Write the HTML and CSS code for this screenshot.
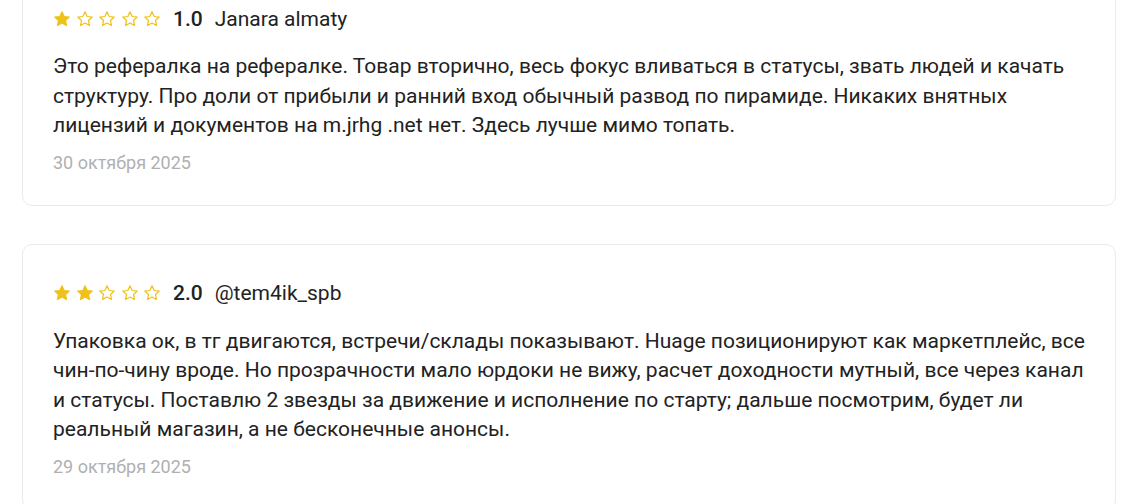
FILE: index.html
```html
<!DOCTYPE html>
<html lang="ru">
<head>
<meta charset="utf-8">
<link rel="stylesheet" href="styles.css">
</head>
<body>
<div class="reviews">
  <div class="card">
    <div class="head">
      <div class="stars">
        <svg class="star on" viewBox="0 0 24 24"><path d="M12 2.5l2.9 6.2 6.8.7-5.1 4.6 1.5 6.7L12 17.2l-6.1 3.5 1.5-6.7-5.1-4.6 6.8-.7z"/></svg>
        <svg class="star" viewBox="0 0 24 24"><path d="M12 2.5l2.9 6.2 6.8.7-5.1 4.6 1.5 6.7L12 17.2l-6.1 3.5 1.5-6.7-5.1-4.6 6.8-.7z"/></svg>
        <svg class="star" viewBox="0 0 24 24"><path d="M12 2.5l2.9 6.2 6.8.7-5.1 4.6 1.5 6.7L12 17.2l-6.1 3.5 1.5-6.7-5.1-4.6 6.8-.7z"/></svg>
        <svg class="star" viewBox="0 0 24 24"><path d="M12 2.5l2.9 6.2 6.8.7-5.1 4.6 1.5 6.7L12 17.2l-6.1 3.5 1.5-6.7-5.1-4.6 6.8-.7z"/></svg>
        <svg class="star" viewBox="0 0 24 24"><path d="M12 2.5l2.9 6.2 6.8.7-5.1 4.6 1.5 6.7L12 17.2l-6.1 3.5 1.5-6.7-5.1-4.6 6.8-.7z"/></svg>
      </div>
      <span class="score">1.0</span>
      <span class="author">Janara almaty</span>
    </div>
    <p class="text">Это рефералка на рефералке. Товар вторично, весь фокус вливаться в статусы, звать людей и качать структуру. Про доли от прибыли и ранний вход обычный развод по пирамиде. Никаких внятных лицензий и документов на m.jrhg .net нет. Здесь лучше мимо топать.</p>
    <div class="date">30 октября 2025</div>
  </div>
  <div class="card">
    <div class="head">
      <div class="stars">
        <svg class="star on" viewBox="0 0 24 24"><path d="M12 2.5l2.9 6.2 6.8.7-5.1 4.6 1.5 6.7L12 17.2l-6.1 3.5 1.5-6.7-5.1-4.6 6.8-.7z"/></svg>
        <svg class="star on" viewBox="0 0 24 24"><path d="M12 2.5l2.9 6.2 6.8.7-5.1 4.6 1.5 6.7L12 17.2l-6.1 3.5 1.5-6.7-5.1-4.6 6.8-.7z"/></svg>
        <svg class="star" viewBox="0 0 24 24"><path d="M12 2.5l2.9 6.2 6.8.7-5.1 4.6 1.5 6.7L12 17.2l-6.1 3.5 1.5-6.7-5.1-4.6 6.8-.7z"/></svg>
        <svg class="star" viewBox="0 0 24 24"><path d="M12 2.5l2.9 6.2 6.8.7-5.1 4.6 1.5 6.7L12 17.2l-6.1 3.5 1.5-6.7-5.1-4.6 6.8-.7z"/></svg>
        <svg class="star" viewBox="0 0 24 24"><path d="M12 2.5l2.9 6.2 6.8.7-5.1 4.6 1.5 6.7L12 17.2l-6.1 3.5 1.5-6.7-5.1-4.6 6.8-.7z"/></svg>
      </div>
      <span class="score">2.0</span>
      <span class="author">@tem4ik_spb</span>
    </div>
    <p class="text">Упаковка ок, в тг двигаются, встречи/склады показывают. Huage позиционируют как маркетплейс, все чин-по-чину вроде. Но прозрачности мало юрдоки не вижу, расчет доходности мутный, все через канал и статусы. Поставлю 2 звезды за движение и исполнение по старту; дальше посмотрим, будет ли реальный магазин, а не бесконечные анонсы.</p>
    <div class="date">29 октября 2025</div>
  </div>
</div>
</body>
</html>
```

FILE: styles.css
```css
html, body {
  margin: 0;
  padding: 0;
  background: #ffffff;
}
body {
  font-family: Roboto, "Liberation Sans", sans-serif;
  color: #222222;
  overflow: hidden;
}
.reviews {
  display: flex;
  flex-direction: column;
  gap: 38px;
  width: 1094px;
  margin: -31px 0 0 22px;
}
.card {
  border: 1px solid #ebebeb;
  border-radius: 10px;
  padding: 34px 30px 29px 30px;
  background: #fff;
}
.head {
  display: flex;
  align-items: center;
  height: 29px;
  font-size: 21px;
}
.stars {
  display: flex;
  gap: 4.5px;
  margin-right: 12px;
}
.star {
  width: 18px;
  height: 18px;
  fill: #fff;
  stroke: #efc21a;
  stroke-width: 1.6;
  stroke-linejoin: round;
}
.star.on {
  fill: #efc21a;
}
.score {
  font-weight: 500;
  margin-right: 12px;
}
.author {
  font-weight: 400;
}
.text {
  margin: 19px 0 0 0;
  font-size: 21px;
  line-height: 29.5px;
  color: #222;
}
.date {
  margin-top: 9px;
  font-size: 18px;
  line-height: 26px;
  color: #b0b0b0;
}
```
